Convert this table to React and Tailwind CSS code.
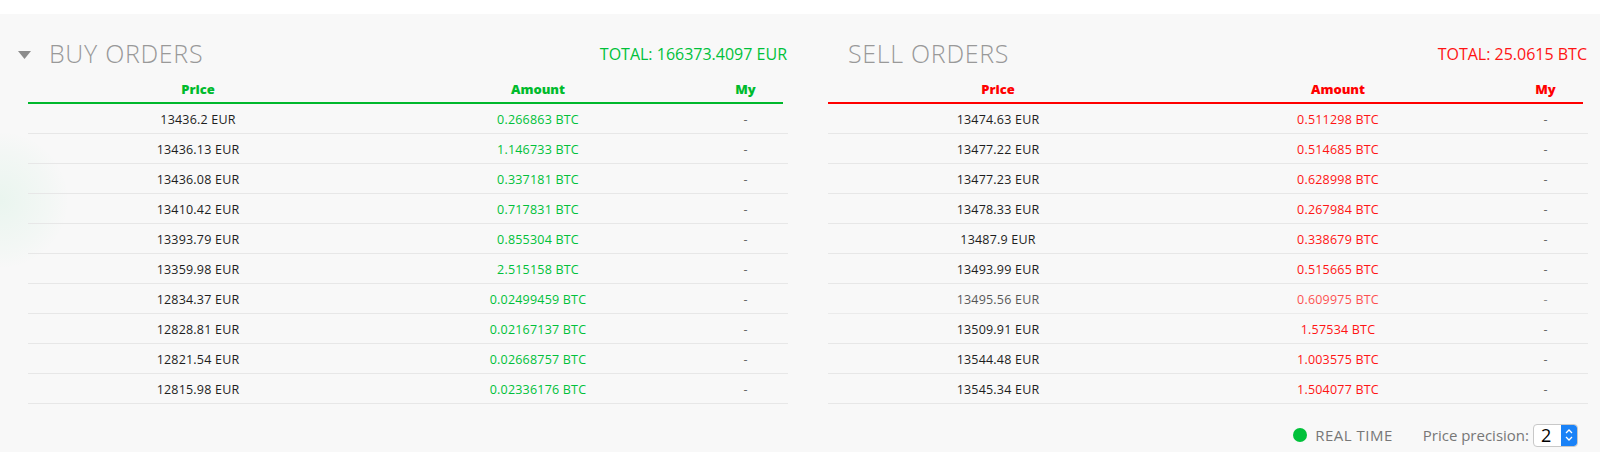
import React from 'react';

const buyOrders = [
  ['13436.2 EUR', '0.266863 BTC'],
  ['13436.13 EUR', '1.146733 BTC'],
  ['13436.08 EUR', '0.337181 BTC'],
  ['13410.42 EUR', '0.717831 BTC'],
  ['13393.79 EUR', '0.855304 BTC'],
  ['13359.98 EUR', '2.515158 BTC'],
  ['12834.37 EUR', '0.02499459 BTC'],
  ['12828.81 EUR', '0.02167137 BTC'],
  ['12821.54 EUR', '0.02668757 BTC'],
  ['12815.98 EUR', '0.02336176 BTC'],
];

const sellOrders = [
  ['13474.63 EUR', '0.511298 BTC'],
  ['13477.22 EUR', '0.514685 BTC'],
  ['13477.23 EUR', '0.628998 BTC'],
  ['13478.33 EUR', '0.267984 BTC'],
  ['13487.9 EUR', '0.338679 BTC'],
  ['13493.99 EUR', '0.515665 BTC'],
  ['13495.56 EUR', '0.609975 BTC', true],
  ['13509.91 EUR', '1.57534 BTC'],
  ['13544.48 EUR', '1.003575 BTC'],
  ['13545.34 EUR', '1.504077 BTC'],
];

const OrderTable = ({ rows, buy }) => {
  const head = buy ? 'text-[#00bb2d]' : 'text-[#ff0000]';
  const line = buy ? 'border-[#00b82c]' : 'border-[#ff0000]';
  const amount = buy ? 'text-[#00c13a]' : 'text-[#ff1414]';
  return (
    <div className="w-[760px]">
      <div className={`flex h-[34px] pt-[8px] items-center w-[755px] border-b-2 ${line} text-[13px] font-extrabold ${head}`}>
        <div className="w-[340px] text-center">Price</div>
        <div className="w-[340px] text-center">Amount</div>
        <div className="w-[75px] text-center">My</div>
      </div>
      {rows.map(([price, amt, dim], idx) => (
        <div key={idx} className={`flex h-[30px] pt-[3px] items-center border-b border-[#e7e7e7] text-[12.5px] tracking-[0.2px] ${dim ? 'opacity-75' : ''}`}>
          <div className="w-[340px] text-center text-[#1e1e1e]">{price}</div>
          <div className={`w-[340px] text-center ${amount}`}>{amt}</div>
          <div className="w-[75px] text-center text-[#666]">-</div>
        </div>
      ))}
    </div>
  );
};

const App = () => {
  return (
    <div className="relative w-[1607px] h-[452px] bg-white pt-[14px] overflow-hidden font-['Open_Sans',sans-serif]">
      <div className="relative w-[1600px] h-[438px] bg-[#f8f8f8] flex pl-[18px] overflow-hidden">
        <div className="absolute -left-[70px] top-[116px] w-[140px] h-[140px] rounded-full bg-[radial-gradient(circle,rgba(0,200,90,0.06),rgba(0,200,90,0.02)_50%,transparent_70%)]" />

        <div className="relative w-[770px]">
          <div className="flex items-center justify-between h-[32px] mt-[24px] pr-[1px]">
            <div className="flex items-center">
              <svg width="13" height="8" viewBox="0 0 13 8" className="mt-[1px]">
                <path d="M0 0 H13 L6.5 8 Z" fill="#8c8c8c" />
              </svg>
              <span className="ml-[18px] text-[25px] font-light text-[#999] tracking-[0.7px]">BUY ORDERS</span>
            </div>
            <span className="text-[16px] text-[#00c13a]">TOTAL: 166373.4097 EUR</span>
          </div>
          <div className="ml-[10px]">
            <OrderTable rows={buyOrders} buy />
          </div>
        </div>

        <div className="w-[760px] ml-[40px]">
          <div className="flex items-center justify-between h-[32px] mt-[24px] pr-[1px]">
            <span className="ml-[20px] text-[25px] font-light text-[#999] tracking-[0.7px]">SELL ORDERS</span>
            <span className="text-[16px] text-[#ff1414]">TOTAL: 25.0615 BTC</span>
          </div>
          <OrderTable rows={sellOrders} />
          <div className="flex items-center justify-end h-[28px] mt-[17px] mr-[10px]">
            <span className="w-[14px] h-[14px] rounded-full bg-[#00c13a]" />
            <span className="ml-[8px] text-[15px] tracking-[0.5px] text-[#777]">REAL TIME</span>
            <span className="ml-[30px] text-[15px] text-[#777]">Price precision:</span>
            <div className="ml-[4px] flex items-stretch w-[45px] h-[23px] bg-white border border-[#c8c8c8] rounded-[4px] overflow-hidden">
              <span className="flex-1 pl-[7px] text-[18px] leading-[21px] text-black">2</span>
              <span className="w-[16px] bg-[#1a82f7] flex flex-col items-center justify-center gap-[2px] rounded-r-[3px]">
                <svg width="8" height="5" viewBox="0 0 8 5"><path d="M1 4 L4 1 L7 4" stroke="#fff" strokeWidth="1.3" fill="none" /></svg>
                <svg width="8" height="5" viewBox="0 0 8 5"><path d="M1 1 L4 4 L7 1" stroke="#fff" strokeWidth="1.3" fill="none" /></svg>
              </span>
            </div>
          </div>
        </div>
      </div>
    </div>
  );
};

export default App;
